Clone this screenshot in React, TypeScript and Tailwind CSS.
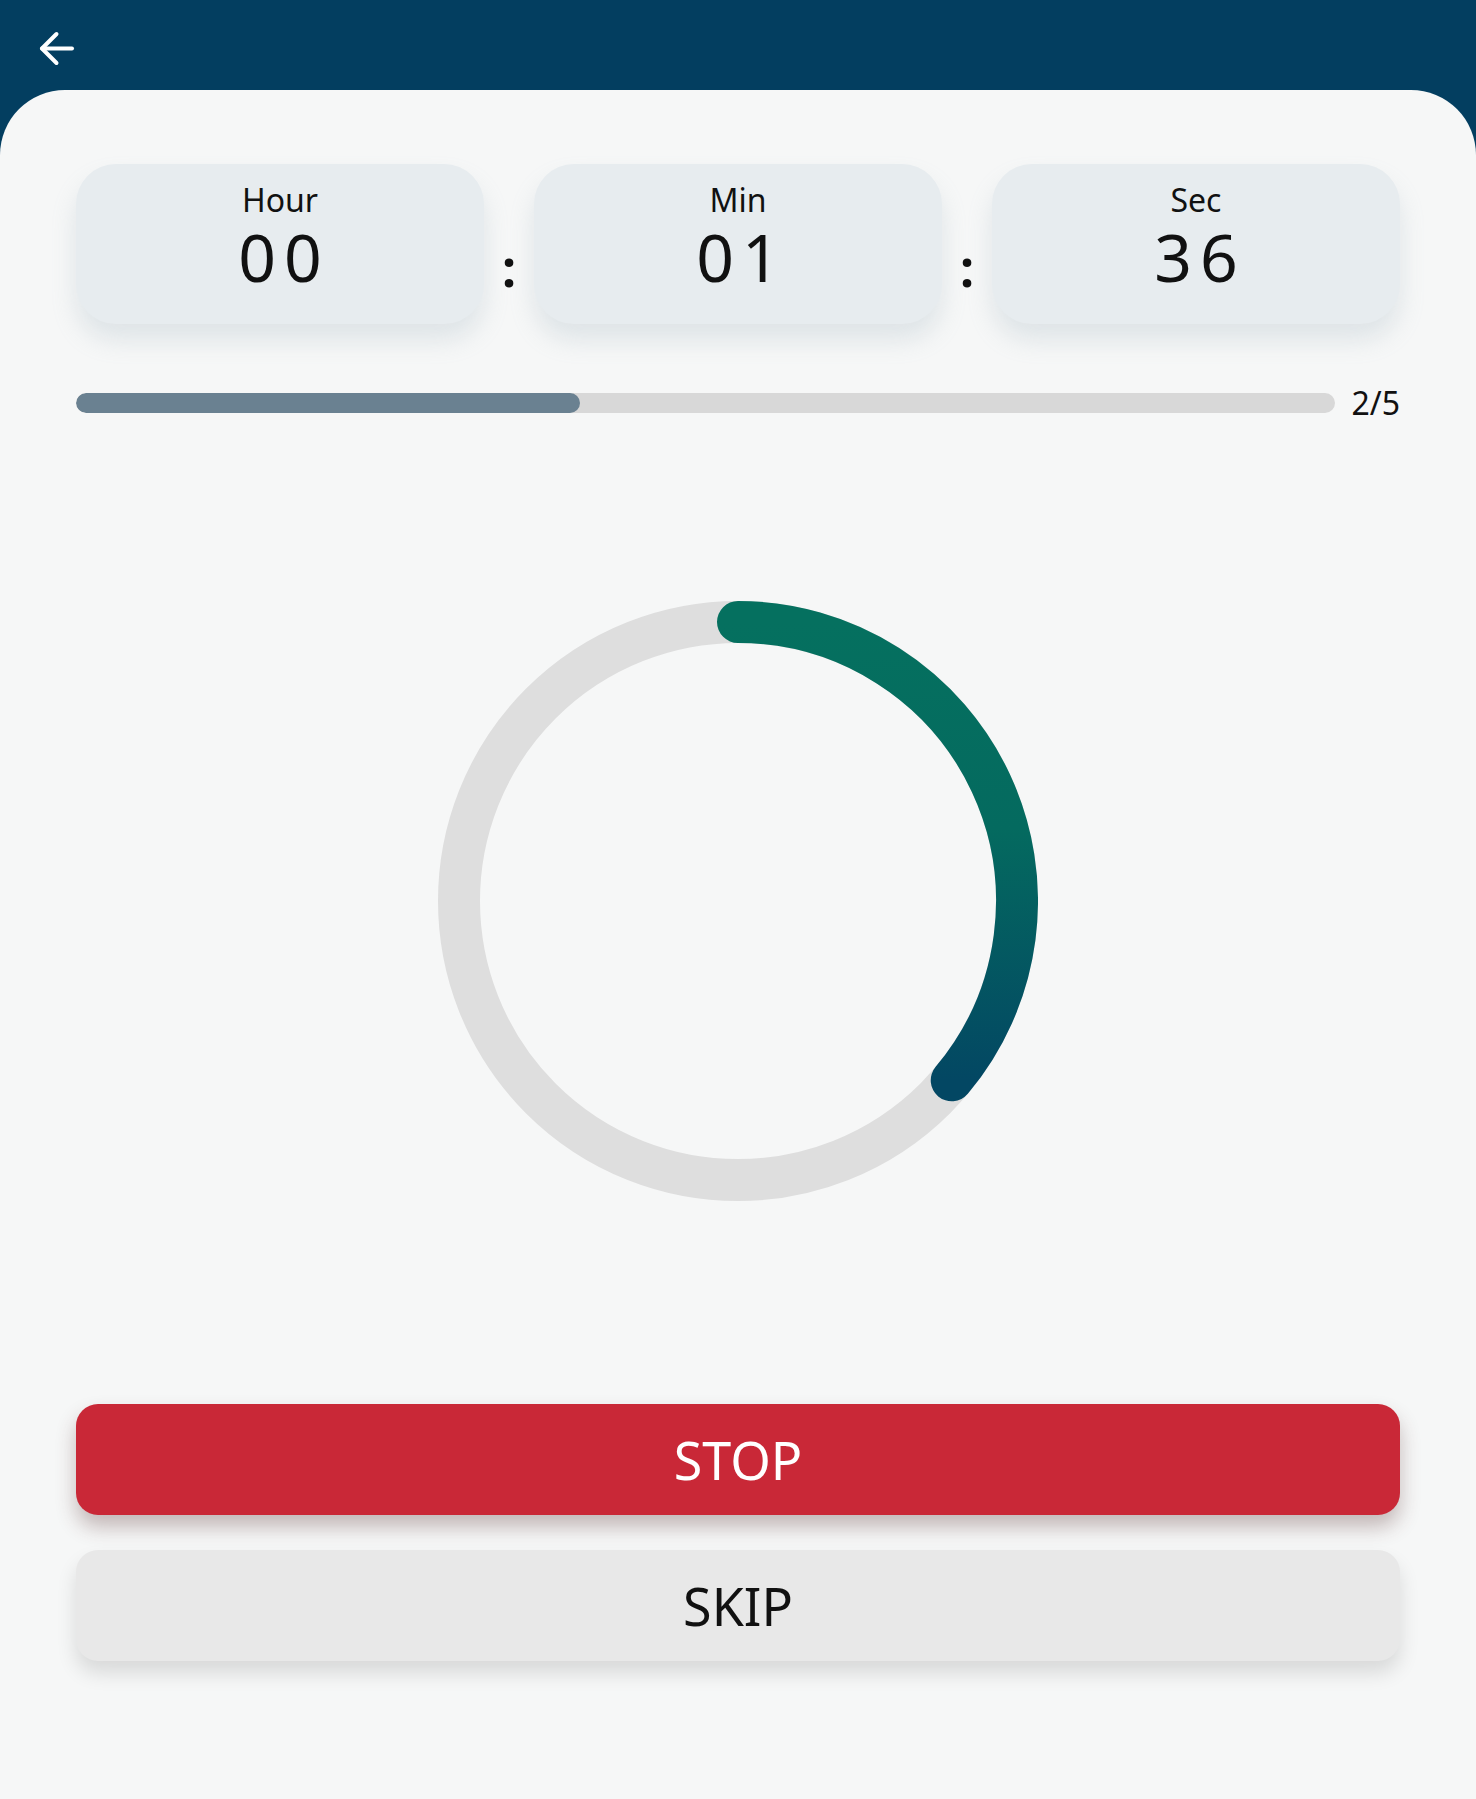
import React from "react";

const font = { fontFamily: '"Noto Sans", "Open Sans", sans-serif' };

function TimeBox({ label, value }: { label: string; value: string }) {
  return (
    <div className="flex h-[160px] flex-1 flex-col items-center rounded-[40px] bg-[#e7ecef] pt-[20px] shadow-[0_16px_24px_rgba(150,170,185,0.24)]">
      <div className="text-[32px] leading-[32px] text-[#111]">{label}</div>
      <div className="mt-[7px] pl-[8px] text-[66px] leading-[66px] tracking-[8px] text-[#111]">{value}</div>
    </div>
  );
}

function Colon() {
  return (
    <div className="flex w-[50px] justify-center pt-[79px] text-[50px] font-bold leading-[50px] text-[#111]">:</div>
  );
}

function Ring() {
  const cx = 300;
  const cy = 300;
  const r = 279;
  const angle = (130 * Math.PI) / 180;
  const ex = cx + r * Math.sin(angle);
  const ey = cy - r * Math.cos(angle);
  return (
    <svg width="600" height="600" viewBox="0 0 600 600">
      <defs>
        <linearGradient id="arcg" x1="0" y1="0" x2="0" y2="1">
          <stop offset="0%" stopColor="#05705f" />
          <stop offset="45%" stopColor="#046a5f" />
          <stop offset="100%" stopColor="#034763" />
        </linearGradient>
      </defs>
      <circle cx={cx} cy={cy} r={r} fill="none" stroke="#dedede" strokeWidth="42" />
      <path
        d={`M ${cx} ${cy - r} A ${r} ${r} 0 0 1 ${ex} ${ey}`}
        fill="none"
        stroke="url(#arcg)"
        strokeWidth="42"
        strokeLinecap="round"
      />
    </svg>
  );
}

export default function App() {
  return (
    <div className="flex min-h-[1799px] w-full flex-col bg-[#033e60]" style={font}>
      <div className="h-[90px] shrink-0">
        <svg className="ml-[38px] mt-[30px]" width="37" height="37" viewBox="0 0 37 37">
          <path d="M4 18.5H34" stroke="#fff" strokeWidth="4" strokeLinecap="round" fill="none" />
          <path d="M18.5 4L4 18.5L18.5 33" stroke="#fff" strokeWidth="4" strokeLinecap="round" strokeLinejoin="round" fill="none" />
        </svg>
      </div>
      <div className="flex flex-1 flex-col rounded-t-[65px] bg-[#f6f7f7] px-[76px] pt-[74px]">
        <div className="flex">
          <TimeBox label="Hour" value="00" />
          <Colon />
          <TimeBox label="Min" value="01" />
          <Colon />
          <TimeBox label="Sec" value="36" />
        </div>
        <div className="mt-[63px] flex items-center gap-[16px]">
          <div className="h-[20px] flex-1 overflow-hidden rounded-full bg-[#d8d8d8]">
            <div className="h-full w-[40%] rounded-full bg-[#6a8191]" />
          </div>
          <div className="text-[32px] leading-[32px] text-[#111]">2/5</div>
        </div>
        <div className="mt-[182px] flex justify-center">
          <Ring />
        </div>
        <button className="mt-[203px] flex h-[111px] w-full items-center justify-center rounded-[22px] bg-[#c92837] text-[52px] text-white shadow-[0_12px_20px_rgba(80,40,40,0.3)]">
          STOP
        </button>
        <button className="mt-[35px] flex h-[111px] w-full items-center justify-center rounded-[22px] bg-[#e8e8e8] text-[52px] text-[#111] shadow-[0_12px_20px_rgba(0,0,0,0.12)]">
          SKIP
        </button>
      </div>
    </div>
  );
}
